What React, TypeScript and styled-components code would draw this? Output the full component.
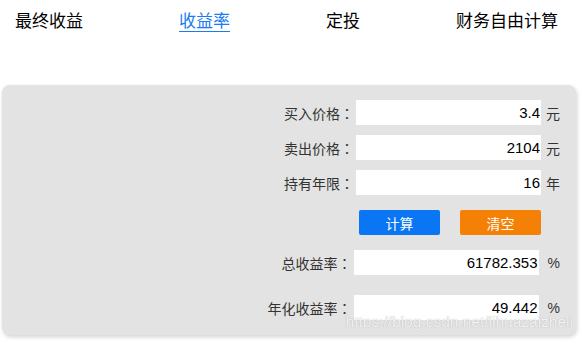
import React, { useState } from 'react'
import styled, { createGlobalStyle } from 'styled-components'

const GlobalStyle = createGlobalStyle`
  html, body {
    margin: 0;
    padding: 0;
    background: #fff;
  }
  body {
    font-family: "Liberation Sans", "Noto Sans CJK SC", sans-serif;
    width: 583px;
    height: 342px;
    overflow: hidden;
  }
`

const Page = styled.div`
  width: 583px;
  height: 342px;
  position: relative;
`

const TabBar = styled.div`
  display: flex;
  justify-content: space-between;
  align-items: flex-start;
  padding: 12px 25px 0 15px;
  height: 85px;
  box-sizing: border-box;
`

const Tab = styled.div<{ $active?: boolean }>`
  font-size: 17px;
  line-height: 19px;
  height: 19px;
  color: ${props => (props.$active ? '#1a7cf0' : '#000')};
  border-bottom: 1px solid ${props => (props.$active ? '#1a7cf0' : 'transparent')};
  cursor: pointer;
`

const Panel = styled.div`
  margin: 0 7px 0 2px;
  background: #e3e3e3;
  border-radius: 8px;
  box-shadow: 1px 2px 4px rgba(0, 0, 0, 0.18);
  padding: 15px 16px 15px 0;
  display: flex;
  flex-direction: column;
  position: relative;
`

const Row = styled.div<{ $gap: number }>`
  display: flex;
  justify-content: flex-end;
  align-items: center;
  height: 25px;
  margin-top: ${props => props.$gap}px;
`

const Label = styled.span`
  font-size: 14px;
  color: #333;
  margin-right: 2px;
  white-space: nowrap;
`

const Colon = styled.span`
  font-family: "Noto Sans CJK TC", "Noto Sans CJK SC", sans-serif;
`

const Field = styled.input`
  width: 185px;
  height: 25px;
  box-sizing: border-box;
  border: none;
  outline: none;
  background: #fff;
  padding: 0 1px 0 4px;
  text-align: right;
  font-family: "Liberation Sans", "Noto Sans CJK SC", sans-serif;
  font-size: 15px;
  color: #000;
`

const Unit = styled.span<{ $space: number }>`
  font-size: 14px;
  color: #333;
  margin-left: ${props => props.$space}px;
  white-space: nowrap;
`

const ButtonRow = styled.div`
  display: flex;
  justify-content: flex-end;
  gap: 20px;
  margin-top: 15px;
  padding-right: 19px;
`

const Button = styled.button<{ $color: string }>`
  width: 81px;
  height: 25px;
  border: none;
  border-radius: 2px;
  background: ${props => props.$color};
  color: #fff;
  font-size: 14px;
  font-family: "Liberation Sans", "Noto Sans CJK SC", sans-serif;
  padding: 0;
  cursor: pointer;
`

const Watermark = styled.div`
  position: absolute;
  right: 3px;
  bottom: 4px;
  font-size: 15.5px;
  color: rgba(255, 255, 255, 0.85);
  text-shadow: 0 0 1px rgba(120, 120, 120, 0.6);
  pointer-events: none;
  white-space: nowrap;
`

const tabs = ['最终收益', '收益率', '定投', '财务自由计算']

export default function App() {
  const [active, setActive] = useState(1)
  const [buy, setBuy] = useState('3.4')
  const [sell, setSell] = useState('2104')
  const [years, setYears] = useState('16')
  const [total, setTotal] = useState('61782.353')
  const [annual, setAnnual] = useState('49.442')

  const calc = () => {
    const b = parseFloat(buy)
    const s = parseFloat(sell)
    const y = parseFloat(years)
    if (!b || !s || !y) return
    const t = (s / b - 1) * 100
    const a = (Math.pow(s / b, 1 / y) - 1) * 100
    setTotal(t.toFixed(3))
    setAnnual(a.toFixed(3))
  }

  const clear = () => {
    setBuy('')
    setSell('')
    setYears('')
    setTotal('')
    setAnnual('')
  }

  return (
    <Page>
      <GlobalStyle />
      <TabBar>
        {tabs.map((t, i) => (
          <Tab key={t} $active={i === active} onClick={() => setActive(i)}>{t}</Tab>
        ))}
      </TabBar>
      <Panel>
        <Row $gap={0}>
          <Label>买入价格<Colon>：</Colon></Label>
          <Field value={buy} onChange={e => setBuy(e.target.value)} />
          <Unit $space={5}>元</Unit>
        </Row>
        <Row $gap={10}>
          <Label>卖出价格<Colon>：</Colon></Label>
          <Field value={sell} onChange={e => setSell(e.target.value)} />
          <Unit $space={5}>元</Unit>
        </Row>
        <Row $gap={10}>
          <Label>持有年限<Colon>：</Colon></Label>
          <Field value={years} onChange={e => setYears(e.target.value)} />
          <Unit $space={5}>年</Unit>
        </Row>
        <ButtonRow>
          <Button $color="#0a76f3" onClick={calc}>计算</Button>
          <Button $color="#f58006" onClick={clear}>清空</Button>
        </ButtonRow>
        <Row $gap={15}>
          <Label>总收益率<Colon>：</Colon></Label>
          <Field value={total} readOnly />
          <Unit $space={9}>%</Unit>
        </Row>
        <Row $gap={20}>
          <Label>年化收益率<Colon>：</Colon></Label>
          <Field value={annual} readOnly />
          <Unit $space={9}>%</Unit>
        </Row>
        <Watermark>https://blog.csdn.net/lihuazaizheli</Watermark>
      </Panel>
    </Page>
  )
}
